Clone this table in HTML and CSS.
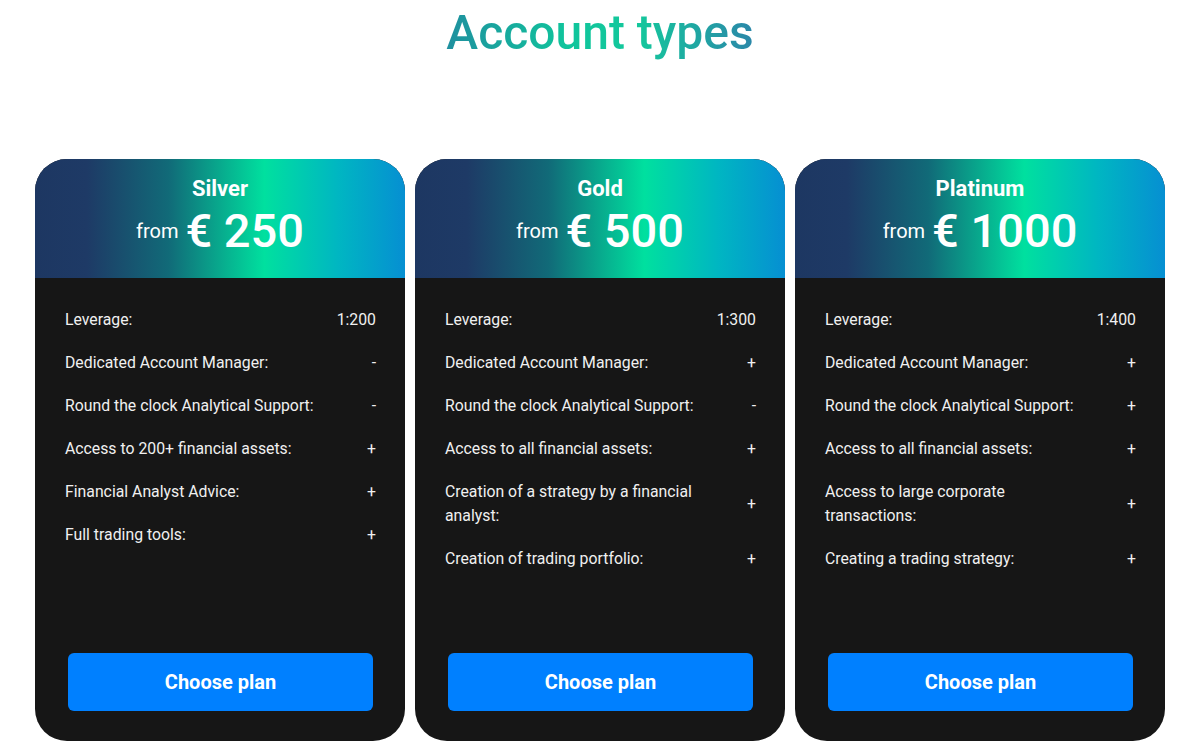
FILE: index.html
```html
<!DOCTYPE html>
<html lang="en">
<head>
  <meta charset="UTF-8">
  <title>Account types</title>
  <link rel="stylesheet" href="styles.css">
</head>
<body>
  <h1 class="title">Account types</h1>

  <div class="plans">
    <!-- Silver -->
    <div class="plan">
      <div class="plan-head">
        <div class="plan-name">Silver</div>
        <div class="plan-price"><span class="from">from</span><span>€ 250</span></div>
      </div>
      <div class="plan-body">
        <ul class="features">
          <li><span>Leverage:</span><b>1:200</b></li>
          <li><span>Dedicated Account Manager:</span><b>-</b></li>
          <li><span>Round the clock Analytical Support:</span><b>-</b></li>
          <li><span>Access to 200+ financial assets:</span><b>+</b></li>
          <li><span>Financial Analyst Advice:</span><b>+</b></li>
          <li><span>Full trading tools:</span><b>+</b></li>
        </ul>
        <button class="choose">Choose plan</button>
      </div>
    </div>

    <!-- Gold -->
    <div class="plan">
      <div class="plan-head">
        <div class="plan-name">Gold</div>
        <div class="plan-price"><span class="from">from</span><span>€ 500</span></div>
      </div>
      <div class="plan-body">
        <ul class="features">
          <li><span>Leverage:</span><b>1:300</b></li>
          <li><span>Dedicated Account Manager:</span><b>+</b></li>
          <li><span>Round the clock Analytical Support:</span><b>-</b></li>
          <li><span>Access to all financial assets:</span><b>+</b></li>
          <li><span>Creation of a strategy by a financial analyst:</span><b>+</b></li>
          <li><span>Creation of trading portfolio:</span><b>+</b></li>
        </ul>
        <button class="choose">Choose plan</button>
      </div>
    </div>

    <!-- Platinum -->
    <div class="plan">
      <div class="plan-head">
        <div class="plan-name">Platinum</div>
        <div class="plan-price"><span class="from">from</span><span>€ 1000</span></div>
      </div>
      <div class="plan-body">
        <ul class="features">
          <li><span>Leverage:</span><b>1:400</b></li>
          <li><span>Dedicated Account Manager:</span><b>+</b></li>
          <li><span>Round the clock Analytical Support:</span><b>+</b></li>
          <li><span>Access to all financial assets:</span><b>+</b></li>
          <li><span>Access to large corporate transactions:</span><b>+</b></li>
          <li><span>Creating a trading strategy:</span><b>+</b></li>
        </ul>
        <button class="choose">Choose plan</button>
      </div>
    </div>
  </div>
</body>
</html>
```

FILE: styles.css
```css
body{
  margin:0;
  background:#fff;
  font-family: Roboto, "Liberation Sans", sans-serif;
  color:#f2f2f2;
}
.title{
  margin:5px auto 0;
  width:310px;
  height:56px;
  line-height:56px;
  font-size:48px;
  font-weight:500;
  text-align:center;
  background:linear-gradient(90deg,#1f8f9f 0%,#10c59c 40%,#14c89c 62%,#2b86a9 100%);
  -webkit-background-clip:text;
  background-clip:text;
  color:transparent;
}
.plans{
  display:flex;
  gap:10px;
  padding:0 35px;
  margin-top:98px;
}
.plan{
  flex:1;
  display:flex;
  flex-direction:column;
  height:582px;
  border-radius:32px;
  overflow:hidden;
  background:#161616;
}
.plan-head{
  height:119px;
  box-sizing:border-box;
  padding-top:17px;
  text-align:center;
  color:#fff;
  background:linear-gradient(90deg,#1d3762 0%,#1e3a66 14%,#116a78 36%,#00e09f 62%,#00b6c2 82%,#068fd2 100%);
}
.plan-name{
  font-size:22px;
  font-weight:700;
  line-height:26px;
}
.plan-price{
  display:flex;
  justify-content:center;
  align-items:center;
  gap:7px;
  font-size:47px;
  font-weight:500;
  line-height:56px;
  margin-top:1px;
}
.plan-price .from{
  font-size:20px;
  font-weight:400;
  line-height:24px;
}
.plan-body{
  flex:1;
  display:flex;
  flex-direction:column;
  padding:30px 29px 30px 30px;
}
.features{
  list-style:none;
  margin:0;
  padding:0;
  display:flex;
  flex-direction:column;
  gap:19px;
}
.features li{
  display:flex;
  align-items:center;
  justify-content:space-between;
  gap:20px;
  font-size:15.8px;
  line-height:24px;
  color:#f0f0f0;
}
.features li span{max-width:262px;}
.features li b{font-weight:400;}
.choose{
  margin:auto 3px 0;
  height:58px;
  border:0;
  border-radius:6px;
  background:#0080ff;
  color:#fff;
  font-family:inherit;
  font-size:20px;
  font-weight:700;
  cursor:pointer;
}
```
